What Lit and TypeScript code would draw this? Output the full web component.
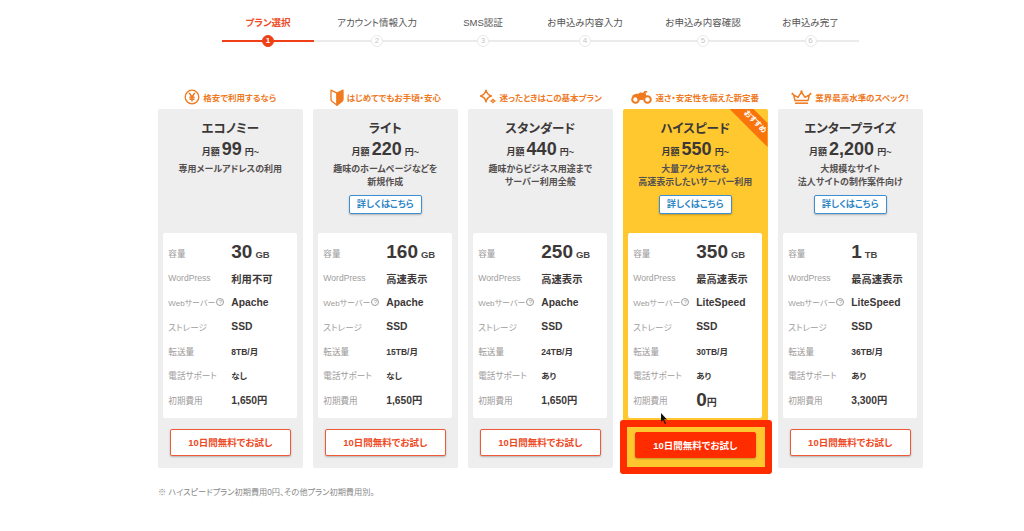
import { LitElement, html, css, svg } from "lit";
import { customElement } from "lit/decorators.js";

const steps = [
  ["プラン選択", 92],
  ["アカウント情報入力", 126],
  ["SMS認証", 86],
  ["お申込み内容入力", 118],
  ["お申込み内容確認", 118],
  ["お申込み完了", 97],
] as const;

const icons = {
  yen: svg`<svg class="ic" width="16" height="16" viewBox="0 0 16 16"><circle cx="8" cy="8" r="6.8" fill="none" stroke="#ef7a1f" stroke-width="1.3"/><path d="M5.2 3.800 8 8l2.800-4.200M8 8v4.600M5.400 8.200h5.200M5.400 10.300h5.200" fill="none" stroke="#ef7a1f" stroke-width="1.500"/></svg>`,
  leaf: svg`<svg class="ic" width="14" height="17" viewBox="0 0 14 17"><path d="M1 1.200 7 4.200v12L2.200 12.600C1.400 12 1 11.200 1 10.200z" fill="#fff" stroke="#ef7a1f" stroke-width="1.300" stroke-linejoin="round"/><path d="M13 1.200 7 4.200v12l4.800-3.600c.8-.6 1.200-1.400 1.200-2.400z" fill="#ef7a1f" stroke="#ef7a1f" stroke-width="1.300" stroke-linejoin="round"/></svg>`,
  spark: svg`<svg class="ic" width="18" height="17" viewBox="0 0 18 17"><path d="M7 1.200C7.600 4.400 9 6 12.400 7 9 8 7.600 9.600 7 13 6.400 9.600 5 8 1.500 7 5 6 6.400 4.400 7 1.200z" fill="none" stroke="#ef7a1f" stroke-width="1.400" stroke-linejoin="round"/><path d="M14 9.800c.2 1.200.8 1.800 2 2.200-1.200.4-1.800 1-2 2.200-.2-1.200-.8-1.800-2-2.200 1.200-.4 1.800-1 2-2.200z" fill="none" stroke="#ef7a1f" stroke-width="1.100"/></svg>`,
  bike: svg`<svg class="ic" width="21" height="14" viewBox="0 0 21 14"><circle cx="4.500" cy="9.500" r="3.300" fill="none" stroke="#ef7a1f" stroke-width="2"/><circle cx="16.500" cy="9.500" r="3.300" fill="none" stroke="#ef7a1f" stroke-width="2"/><path d="M.6 6.800C2.600 4 5 3.600 7 4L9 2.600l3.200.2L13.500 1H16l.5 1.600h-2l1 3.600-2 .6-1.500 3.200H6.500C6.800 7.500 4 5.800.6 6.800z" fill="#ef7a1f"/></svg>`,
  crown: svg`<svg class="ic" width="21" height="15" viewBox="0 0 21 15"><path d="M4 10.500 2.600 4.800 7 7.400 10.500 2 14 7.400l4.400-2.600L17 10.500z" fill="#fff" stroke="#ef7a1f" stroke-width="1.400" stroke-linejoin="round"/><path d="M4 13.200h13" stroke="#ef7a1f" stroke-width="1.500"/><circle cx="1.500" cy="3.800" r="1.100" fill="#ef7a1f"/><circle cx="19.500" cy="3.800" r="1.100" fill="#ef7a1f"/><circle cx="10.500" cy="1.300" r="1.100" fill="#ef7a1f"/></svg>`,
};

interface Plan {
  icon: unknown; tag: string; name: string; price: string; desc: string[]; more: boolean;
  cap: string; unit: string; wp: string; web: string; xfer: string; tel: string; fee: string; yen: string; hot?: boolean;
}

const plans: Plan[] = [
  { icon: icons.yen, tag: "格安で利用するなら", name: "エコノミー", price: "99", desc: ["専用メールアドレスの利用"], more: false, cap: "30", unit: "GB", wp: "利用不可", web: "Apache", xfer: "8TB/月", tel: "なし", fee: "1,650", yen: "円" },
  { icon: icons.leaf, tag: "はじめてでもお手頃・安心", name: "ライト", price: "220", desc: ["趣味のホームページなどを", "新規作成"], more: true, cap: "160", unit: "GB", wp: "高速表示", web: "Apache", xfer: "15TB/月", tel: "なし", fee: "1,650", yen: "円" },
  { icon: icons.spark, tag: "迷ったときはこの基本プラン", name: "スタンダード", price: "440", desc: ["趣味からビジネス用途まで", "サーバー利用全般"], more: false, cap: "250", unit: "GB", wp: "高速表示", web: "Apache", xfer: "24TB/月", tel: "あり", fee: "1,650", yen: "円" },
  { icon: icons.bike, tag: "速さ・安定性を備えた新定番", name: "ハイスピード", price: "550", desc: ["大量アクセスでも", "高速表示したいサーバー利用"], more: true, cap: "350", unit: "GB", wp: "最高速表示", web: "LiteSpeed", xfer: "30TB/月", tel: "あり", fee: "0", yen: "円", hot: true },
  { icon: icons.crown, tag: "業界最高水準のスペック！", name: "エンタープライズ", price: "2,200", desc: ["大規模なサイト", "法人サイトの制作案件向け"], more: true, cap: "1", unit: "TB", wp: "最高速表示", web: "LiteSpeed", xfer: "36TB/月", tel: "あり", fee: "3,300", yen: "円" },
];

@customElement("app-root")
export class AppRoot extends LitElement {
  static styles = css`
    :host {
      display: block;
      height: 531px;
      overflow: hidden;
      background: #fff;
      position: relative;
      font-family: "Liberation Sans", "Noto Sans CJK JP", sans-serif;
      font-feature-settings: "palt";
      color: #3c3838;
    }
    .steps { display: flex; padding: 16px 0 0 222px; }
    .step { display: flex; flex-direction: column; align-items: center; }
    .step-label { font-size: 9.500px; line-height: 14px; color: #555; height: 14px; white-space: nowrap; }
    .step.on .step-label { color: #ee4a25; font-weight: 700; }
    .track { position: relative; width: 100%; height: 12px; margin-top: 5px; display: flex; align-items: center; justify-content: center; }
    .track::before { content: ""; position: absolute; left: 0; right: 0; top: 5px; height: 2px; background: #ebebeb; }
    .step.on .track::before { background: #ee3f16; }
    .dot {
      position: relative; width: 12px; height: 12px; border-radius: 50%; box-sizing: border-box;
      background: #fff; border: 1.500px solid #e9e9e9; color: #c4c4c4;
      font-size: 8px; line-height: 9px; text-align: center;
    }
    .step.on .dot { background: #ee3f16; border-color: #ee3f16; color: #fff; font-weight: 700; }

    .plans {
      display: grid; grid-template-columns: repeat(5, 144.6px); column-gap: 10.4px;
      padding: 40px 0 0 158px;
    }
    .plan { display: flex; flex-direction: column; }
    .tag { height: 20px; display: flex; align-items: center; justify-content: center; gap: 3px; font-size: 8.500px; font-weight: 700; color: #ef7a1f; white-space: nowrap; margin-bottom: 2px; }
    .ic { flex: none; }
    .card { position: relative; height: 359px; background: #eee; border-radius: 2px; display: flex; flex-direction: column; align-items: center; }
    .card.hot { background: #ffc82f; }
    .head { height: 124px; box-sizing: border-box; padding-top: 12px; display: flex; flex-direction: column; align-items: center; width: 100%; }
    .name { font-size: 12.500px; line-height: 16px; font-weight: 700; }
    .price { font-size: 9px; font-weight: 700; line-height: 22px; height: 22px; margin-top: 1px; white-space: nowrap; }
    .price b { font-size: 18px; margin: 0 3px 0 2px; }
    .desc { font-size: 9px; line-height: 13px; font-weight: 700; color: #555050; text-align: center; margin-top: 3px; white-space: nowrap; }
    .more {
      margin-top: 6px; width: 73px; height: 19px; box-sizing: border-box; background: #fff;
      border: 1px solid #3b8fd2; border-radius: 2px; box-shadow: 0 1px 2px rgba(0,0,0,.25);
      color: #2f86c6; font-size: 9.200px; font-weight: 700; line-height: 17px; text-align: center;
    }
    .specs {
      width: 134px; height: 185px; box-sizing: border-box; background: #fff; border-radius: 2px;
      padding: 6px 0 0 5px; display: grid; grid-template-columns: 63px 1fr;
      grid-template-rows: 27px repeat(6, 24.300px); align-items: center;
    }
    .k { font-size: 8.600px; color: #a09c9c; white-space: nowrap; display: flex; align-items: center; gap: 1px; }
    .k.web { font-size: 8px; }
    .q { display: inline-block; width: 8px; height: 8px; box-sizing: border-box; border: 0.8px solid #a09c9c; border-radius: 50%; font-size: 6px; line-height: 6.500px; text-align: center; }
    .v { font-size: 10.300px; font-weight: 700; color: #3c3838; white-space: nowrap; }
    .v.big { font-size: 19px; line-height: 24px; padding-top: 2px; }
    .v.big small { font-size: 9.500px; margin-left: 3px; color: #4a4646; }
    .v.mini { font-size: 8.500px; }
    .v.mid { font-size: 8.500px; }
    .v.zero { font-size: 19px; }
    .v.zero small { font-size: 10px; }
    .cta {
      position: relative; z-index: 1; margin-top: 11px; width: 121px; height: 27px; box-sizing: border-box;
      background: #fff; border: 1px solid #ee5a38; border-radius: 2px; box-shadow: 0 1px 2px rgba(0,0,0,.25);
      color: #ee4a25; font-size: 9.500px; font-weight: 700; line-height: 25px; text-align: center;
    }
    .hot .cta { margin-top: 14px; height: 26px; background: #ff2c00; border-color: #ff2c00; color: #fff; }
    .frame {
      position: absolute; left: -3px; right: -4px; top: 311px; height: 54px; box-sizing: border-box;
      border: 7px solid #ff2c00; border-radius: 3px; background: #ffc82f;
    }
    .ribbon {
      position: absolute; right: 0; top: 0; width: 38px; height: 38px; background: #f9740b;
      clip-path: polygon(0 0, 63% 0, 100% 37%, 100% 100%);
    }
    .ribbon span {
      position: absolute; left: 9px; top: 8px; width: 32px; text-align: center;
      transform: rotate(45deg); color: #fff; font-size: 7.600px; font-weight: 700; line-height: 10px; white-space: nowrap;
    }
    .note { padding: 19px 0 0 158px; font-size: 8.200px; line-height: 12px; color: #888; }
    .cursor { position: absolute; left: 660px; top: 413px; }
  `;

  private row(p: Plan) {
    return html`
      <div class="k">容量</div><div class="v big">${p.cap}<small>${p.unit}</small></div>
      <div class="k">WordPress</div><div class="v">${p.wp}</div>
      <div class="k web">Webサーバー<span class="q">?</span></div><div class="v">${p.web}</div>
      <div class="k">ストレージ</div><div class="v">SSD</div>
      <div class="k">転送量</div><div class="v mini">${p.xfer}</div>
      <div class="k">電話サポート</div><div class="v mid">${p.tel}</div>
      <div class="k">初期費用</div>
      <div class="v ${p.hot ? "zero" : ""}">${p.fee}${p.hot ? html`<small>${p.yen}</small>` : p.yen}</div>
    `;
  }

  render() {
    return html`
      <div class="steps">
        ${steps.map(([t, w], i) => html`
          <div class="step ${i === 0 ? "on" : ""}" style="width:${w}px">
            <div class="step-label">${t}</div>
            <div class="track"><div class="dot">${i + 1}</div></div>
          </div>`)}
      </div>
      <div class="plans">
        ${plans.map((p) => html`
          <div class="plan">
            <div class="tag">${p.icon}<span>${p.tag}</span></div>
            <div class="card ${p.hot ? "hot" : ""}">
              ${p.hot ? html`<div class="ribbon"><span>おすすめ</span></div><div class="frame"></div>` : ""}
              <div class="head">
                <div class="name">${p.name}</div>
                <div class="price">月額<b>${p.price}</b>円~</div>
                <div class="desc">${p.desc.map((d) => html`${d}<br />`)}</div>
                ${p.more ? html`<div class="more">詳しくはこちら</div>` : ""}
              </div>
              <div class="specs">${this.row(p)}</div>
              <div class="cta">10日間無料でお試し</div>
            </div>
          </div>`)}
      </div>
      <div class="note">※ ハイスピードプラン初期費用0円、その他プラン初期費用別。</div>
      <svg class="cursor" width="9" height="12" viewBox="0 0 9 12"><path d="M1 0v9l2-2 2 4 1-.5-2-4h3z" fill="#111"/></svg>
    `;
  }
}
